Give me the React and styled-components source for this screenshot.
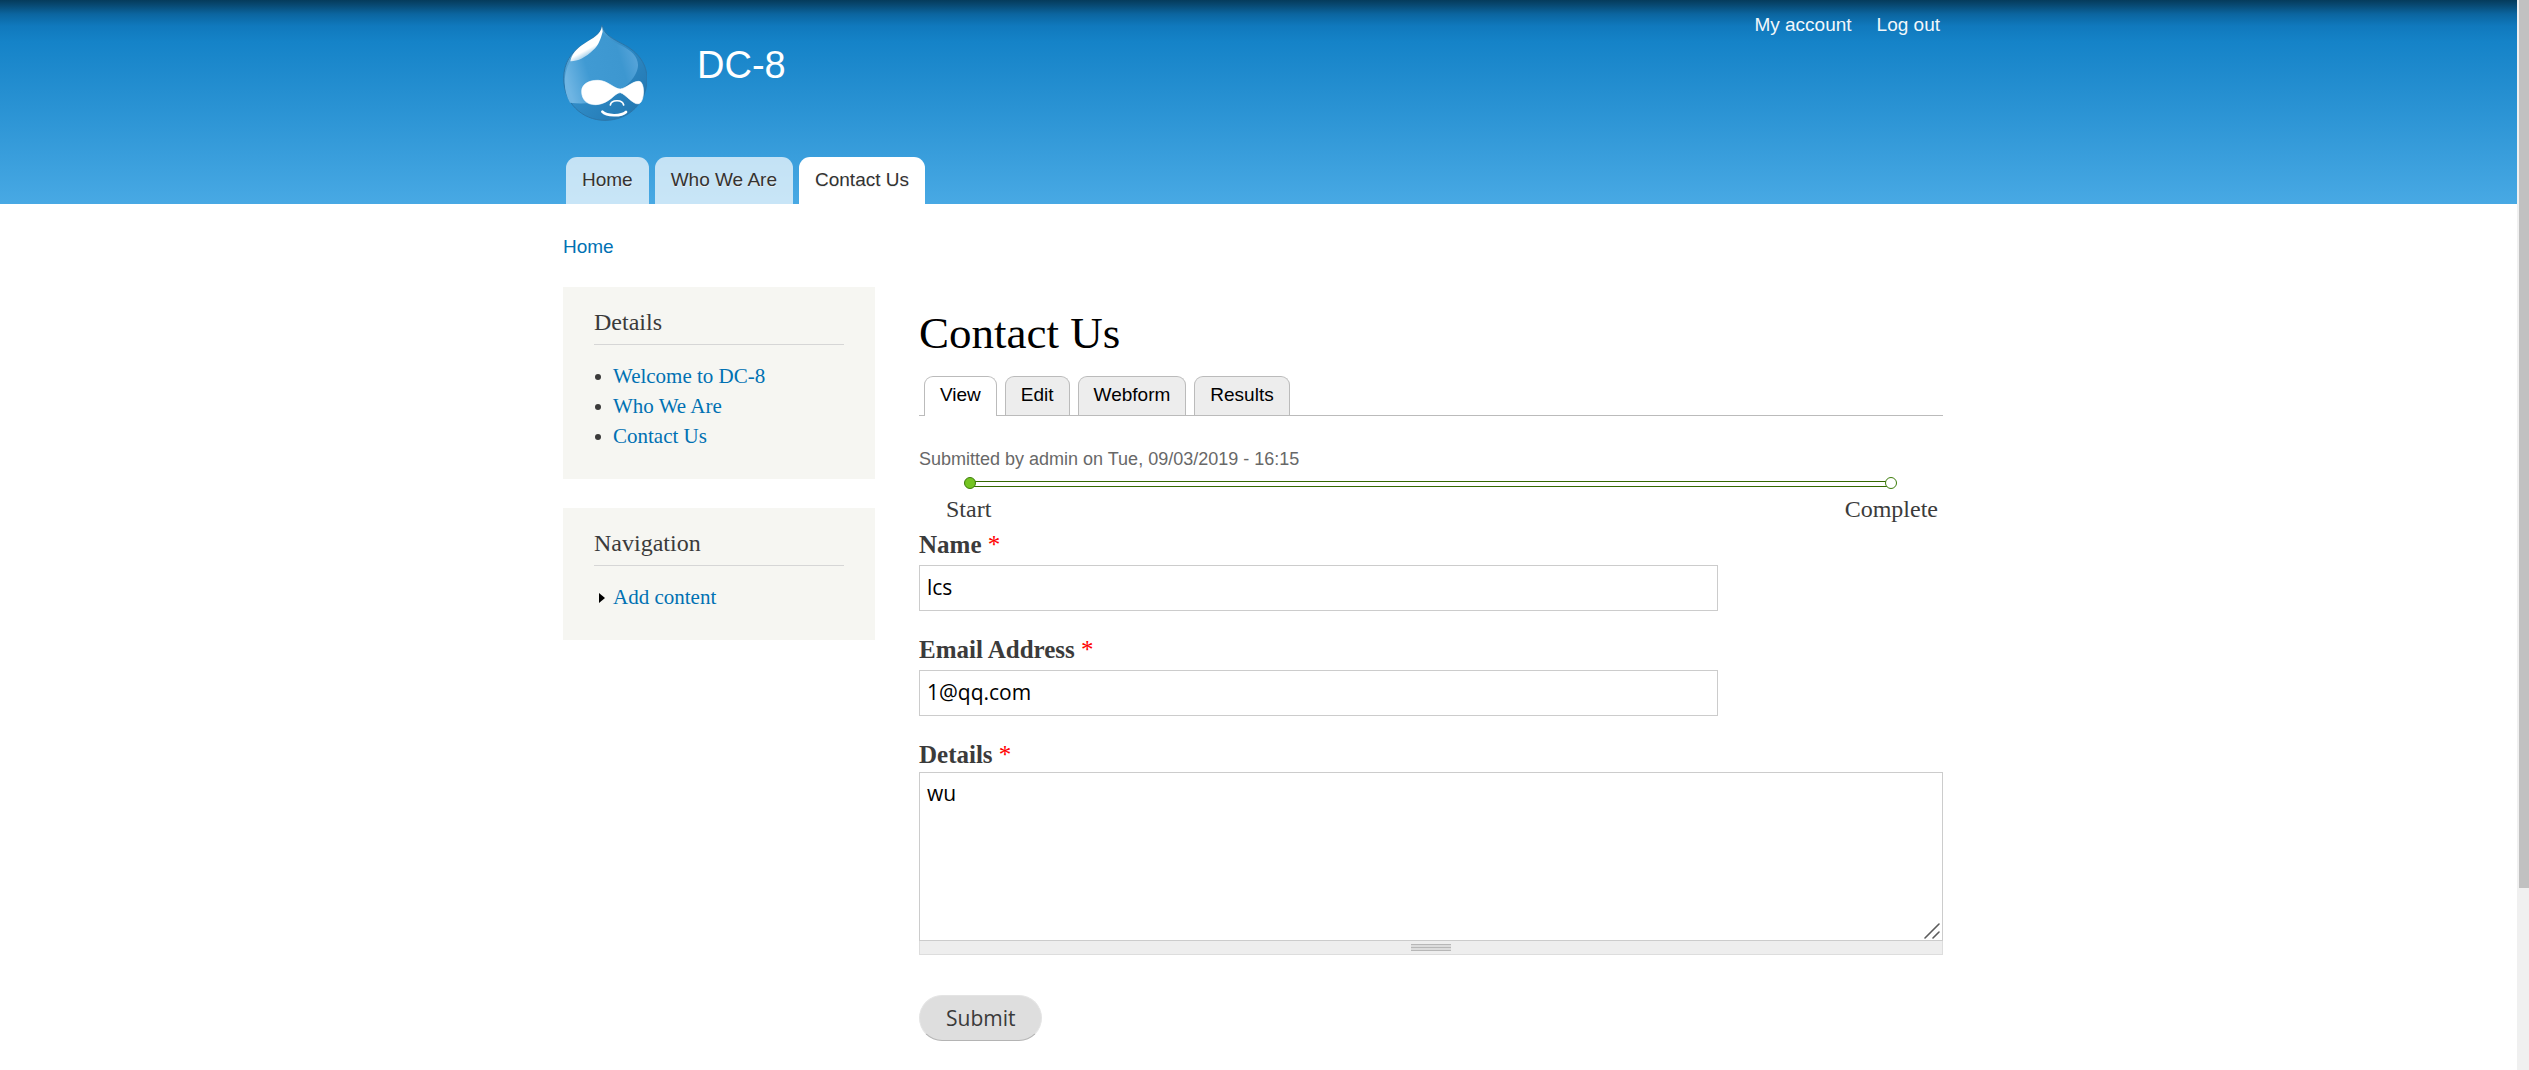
import React from "react";
import styled, { createGlobalStyle, css } from "styled-components";

const sans = `"Liberation Sans", Arial, sans-serif`;
const serif = `"Liberation Serif", Georgia, serif`;
const humanist = `"Open Sans", "Noto Sans", sans-serif`;

const GlobalStyle = createGlobalStyle`
  *, *::before, *::after { box-sizing: border-box; }
  body { margin: 0; background: #fff; color: #3b3b3b; font-family: ${serif}; }
  h1, h2, p, ul, ol { margin: 0; padding: 0; font-weight: normal; }
  ul, ol { list-style: none; }
  a { text-decoration: none; color: #0071b3; }
`;

const Screen = styled.div`
  display: flex;
  min-height: 100vh;
`;

const Page = styled.div`
  flex: 1;
  min-width: 0;
`;

const ScrollTrack = styled.div`
  flex: none;
  width: 12px;
  padding-left: 2px;
  background: #f0f0f0;
`;

const ScrollThumb = styled.div`
  height: 83vh;
  background: #c1c1c1;
`;

const Wrapper = styled.div`
  width: 100%;
  max-width: 1441px;
  margin: 0 auto;
  padding: 0 36px 0 25px;
`;

const Header = styled.header`
  background: linear-gradient(
    to bottom,
    #053b5b 0,
    #084c77 6px,
    #0b659f 14px,
    #1079bd 26px,
    #1583c8 42px,
    #48a9e4 100%
  );
`;

const HeaderInner = styled(Wrapper)`
  display: flex;
  flex-direction: column;
  justify-content: space-between;
  min-height: 204px;
`;

const Masthead = styled.div`
  display: flex;
  align-items: flex-start;
`;

const LogoLink = styled.a`
  display: block;
  padding-top: 25px;
  line-height: 0;
`;

const SiteName = styled.a`
  margin-left: 50px;
  padding-top: 43px;
  color: #fff;
  font: 38px/44px ${sans};
`;

const UserMenu = styled.nav`
  display: flex;
  gap: 25px;
  margin-left: auto;
  padding: 13px 3px 0 0;

  a {
    color: #fff;
    opacity: 0.95;
    font: 19px/24px ${sans};
  }
`;

const MainMenu = styled.nav`
  display: flex;
  gap: 6px;
  padding-left: 3px;
`;

const MenuTab = styled.a`
  padding: 0 16px 1px;
  border-radius: 11px 11px 0 0;
  background: ${(p) => (p.$active ? "#fff" : "rgba(255, 255, 255, 0.7)")};
  color: #333;
  font: 19px/46px ${sans};
  text-shadow: 0 1px #eee;
`;

const Breadcrumb = styled.nav`
  padding: 28px 0 25px;
  font: 19px/30px ${sans};
`;

const Columns = styled.div`
  display: grid;
  grid-template-columns: 312px minmax(0, 1fr);
  column-gap: 44px;
  align-items: start;
`;

const Sidebar = styled.aside`
  display: grid;
  row-gap: 29px;
`;

const Block = styled.section`
  padding: 20px 31px 28px;
  background: #f6f6f2;
`;

const BlockTitle = styled.h2`
  padding-bottom: 7px;
  margin-bottom: 16px;
  border-bottom: 1px solid #d6d6d6;
  font-size: 24px;
  line-height: 30px;
`;

const MenuItem = styled.li`
  display: flex;
  align-items: center;
  font-size: 21px;
  line-height: 30px;

  &::before {
    content: "";
    flex: none;
    ${(p) =>
      p.$collapsed
        ? css`
            margin: 2px 8px 0 5px;
            border: solid transparent;
            border-width: 5px 0 5px 6px;
            border-left-color: #000;
          `
        : css`
            width: 6px;
            height: 6px;
            margin: 2px 12px 0 1px;
            border-radius: 50%;
            background: #3b3b3b;
          `}
  }
`;

const Main = styled.main`
  padding-top: 21px;
`;

const Title = styled.h1`
  margin-bottom: 18px;
  color: #000;
  font-size: 45px;
  line-height: 50px;
`;

const Tabs = styled.nav`
  display: flex;
  gap: 8px;
  padding-left: 5px;
  border-bottom: 1px solid #bbb;
`;

const Tab = styled.a`
  height: ${(p) => (p.$active ? 40 : 39)}px;
  margin-bottom: ${(p) => (p.$active ? -1 : 0)}px;
  padding: 0 15px;
  border: 1px solid #bbb;
  border-bottom: 0;
  border-radius: 9px 9px 0 0;
  background: ${(p) => (p.$active ? "#fff" : "#ededed")};
  color: #000;
  font: 19px/36px ${sans};
`;

const Submitted = styled.p`
  margin: 31px 0 6px;
  color: #686868;
  font: 18px/24px ${sans};
`;

const ProgressTrack = styled.div`
  display: flex;
  align-items: center;
  padding: 0 46px 0 45px;
`;

const ProgressDot = styled.span`
  flex: none;
  z-index: 1;
  width: 12px;
  height: 12px;
  border: 1px solid #3c7d0a;
  border-radius: 50%;
  background: ${(p) => (p.$current ? "#74c421" : "#fff")};
`;

const ProgressBar = styled.span`
  flex: 1;
  height: 6px;
  margin: 2px -2px 0;
  border: solid #356900;
  border-width: 1px 0;
`;

const ProgressLabels = styled.div`
  display: flex;
  justify-content: space-between;
  padding: 5px 5px 6px 27px;
  font-size: 24px;
  line-height: 30px;
`;

const Field = styled.div`
  margin-bottom: 24px;
`;

const Label = styled.label`
  display: block;
  margin-bottom: ${(p) => (p.$tight ? 2 : 5)}px;
  font-size: 25px;
  font-weight: bold;
  line-height: 30px;

  span {
    color: #f00;
    font-weight: normal;
  }
`;

const control = css`
  display: block;
  border: 1px solid #ccc;
  border-radius: 0;
  outline: 0;
  background: #fff;
  color: #000;
  font: 21px/30px ${humanist};
`;

const TextInput = styled.input`
  ${control}
  width: 78%;
  height: 46px;
  padding: 0 7px 2px;
`;

const AreaBox = styled.div`
  position: relative;
`;

const TextArea = styled.textarea`
  ${control}
  width: 100%;
  height: 169px;
  padding: 5px 7px;
  resize: none;
`;

const ResizeMark = styled.svg`
  position: absolute;
  right: 3px;
  bottom: 2px;
`;

const Grippie = styled.div`
  display: flex;
  justify-content: center;
  height: 14px;
  margin-bottom: 40px;
  padding-top: 3px;
  border: 1px solid #ddd;
  border-top: 0;
  background: #eee;

  &::before {
    content: "";
    width: 40px;
    height: 7px;
    background: repeating-linear-gradient(#b7b7b7 0 1px, #dcdcdc 1px 3px);
  }
`;

const SubmitButton = styled.button`
  height: 46px;
  padding: 0 26px 1px;
  border: 1px solid #e4e4e4;
  border-bottom-color: #b4b4b4;
  border-radius: 23px;
  background: #dedede;
  color: #3a3a3a;
  font: 21px/30px ${humanist};
`;

const dropPath =
  "M153 29C150 53 132 64 97 86C60 108 38 143 38 188C38 260 92 314 162 314C234 314 288 260 288 190C288 147 264 110 215 85C186 70 160 58 153 29Z";

function Logo() {
  return (
    <svg width="84" height="96" viewBox="36 28 252 288" role="img" aria-label="Home">
      <defs>
        <linearGradient id="drop" x1="0" y1="0" x2="1" y2="1">
          <stop offset="0" stopColor="#6bb3e0" />
          <stop offset="0.5" stopColor="#2f8ac5" />
          <stop offset="1" stopColor="#1f73ad" />
        </linearGradient>
        <linearGradient id="glass" x1="0" y1="0.6" x2="1" y2="0.3">
          <stop offset="0" stopColor="#6fb5e3" />
          <stop offset="0.3" stopColor="#409ad3" />
          <stop offset="0.75" stopColor="#3d97d0" />
          <stop offset="1" stopColor="#5ba6db" />
        </linearGradient>
        <linearGradient id="shine" x1="0.3" y1="0.2" x2="0.62" y2="0.85">
          <stop offset="0.7" stopColor="#fff" />
          <stop offset="1" stopColor="#fff" stopOpacity="0.4" />
        </linearGradient>
      </defs>
      <path d={dropPath} fill="url(#drop)" stroke="#2b75a8" strokeWidth="3" />
      <path
        d="M153 42C158 64 185 78 212 90C240 104 262 122 261 150C259 182 225 216 192 232C160 258 112 268 57 261C36 227 34 168 64 126C92 92 145 77 153 42Z"
        fill="url(#glass)"
      />
      <path
        d="M153 32C149 58 126 67 98 85C76 99 62 116 58 137C78 138 104 126 126 104C145 86 149 68 155 48Z"
        fill="url(#shine)"
      />
      <path
        d="M92 227C92 206 113 193 142 194C172 195 190 221 208 220C226 218 245 196 264 197C283 198 281 259 264 264C247 269 224 235 208 231C190 231 178 264 135 267C108 268 92 252 92 227Z"
        fill="#fff"
        stroke="#fff"
        strokeWidth="2"
      />
      <g fill="none" stroke="#fff" strokeLinecap="round">
        <path d="M178 268C181 252 214 250 218 268" strokeWidth="5" />
        <path d="M154 288C166 302 212 302 225 289" strokeWidth="8" />
      </g>
    </svg>
  );
}

function Required() {
  return <span aria-hidden="true">*</span>;
}

export default function App() {
  return (
    <Screen>
      <GlobalStyle />
      <Page>
        <Header>
          <HeaderInner>
            <Masthead>
              <LogoLink href="#home">
                <Logo />
              </LogoLink>
              <SiteName href="#home">DC-8</SiteName>
              <UserMenu>
                <a href="#account">My account</a>
                <a href="#logout">Log out</a>
              </UserMenu>
            </Masthead>
            <MainMenu>
              <MenuTab href="#home">Home</MenuTab>
              <MenuTab href="#who">Who We Are</MenuTab>
              <MenuTab href="#contact" $active>
                Contact Us
              </MenuTab>
            </MainMenu>
          </HeaderInner>
        </Header>

        <Wrapper>
          <Breadcrumb>
            <a href="#home">Home</a>
          </Breadcrumb>
          <Columns>
            <Sidebar>
              <Block>
                <BlockTitle>Details</BlockTitle>
                <ul>
                  <MenuItem>
                    <a href="#welcome">Welcome to DC-8</a>
                  </MenuItem>
                  <MenuItem>
                    <a href="#who">Who We Are</a>
                  </MenuItem>
                  <MenuItem>
                    <a href="#contact">Contact Us</a>
                  </MenuItem>
                </ul>
              </Block>
              <Block>
                <BlockTitle>Navigation</BlockTitle>
                <ul>
                  <MenuItem $collapsed>
                    <a href="#add">Add content</a>
                  </MenuItem>
                </ul>
              </Block>
            </Sidebar>

            <Main>
              <Title>Contact Us</Title>
              <Tabs>
                <Tab href="#view" $active>
                  View
                </Tab>
                <Tab href="#edit">Edit</Tab>
                <Tab href="#webform">Webform</Tab>
                <Tab href="#results">Results</Tab>
              </Tabs>
              <Submitted>Submitted by admin on Tue, 09/03/2019 - 16:15</Submitted>

              <ProgressTrack>
                <ProgressDot $current />
                <ProgressBar />
                <ProgressDot />
              </ProgressTrack>
              <ProgressLabels>
                <span>Start</span>
                <span>Complete</span>
              </ProgressLabels>

              <form onSubmit={(e) => e.preventDefault()}>
                <Field>
                  <Label htmlFor="name">
                    Name <Required />
                  </Label>
                  <TextInput id="name" type="text" defaultValue="lcs" />
                </Field>
                <Field>
                  <Label htmlFor="email">
                    Email Address <Required />
                  </Label>
                  <TextInput id="email" type="email" defaultValue="1@qq.com" />
                </Field>
                <Label htmlFor="details" $tight>
                  Details <Required />
                </Label>
                <AreaBox>
                  <TextArea id="details" defaultValue="wu" />
                  <ResizeMark width="16" height="16" viewBox="0 0 16 16" aria-hidden="true">
                    <path
                      d="M1 15L15 1M9 15L15 9"
                      fill="none"
                      stroke="#5c5c5c"
                      strokeWidth="1.6"
                      strokeLinecap="round"
                    />
                  </ResizeMark>
                </AreaBox>
                <Grippie />
                <SubmitButton type="submit">Submit</SubmitButton>
              </form>
            </Main>
          </Columns>
        </Wrapper>
      </Page>
      <ScrollTrack>
        <ScrollThumb />
      </ScrollTrack>
    </Screen>
  );
}
